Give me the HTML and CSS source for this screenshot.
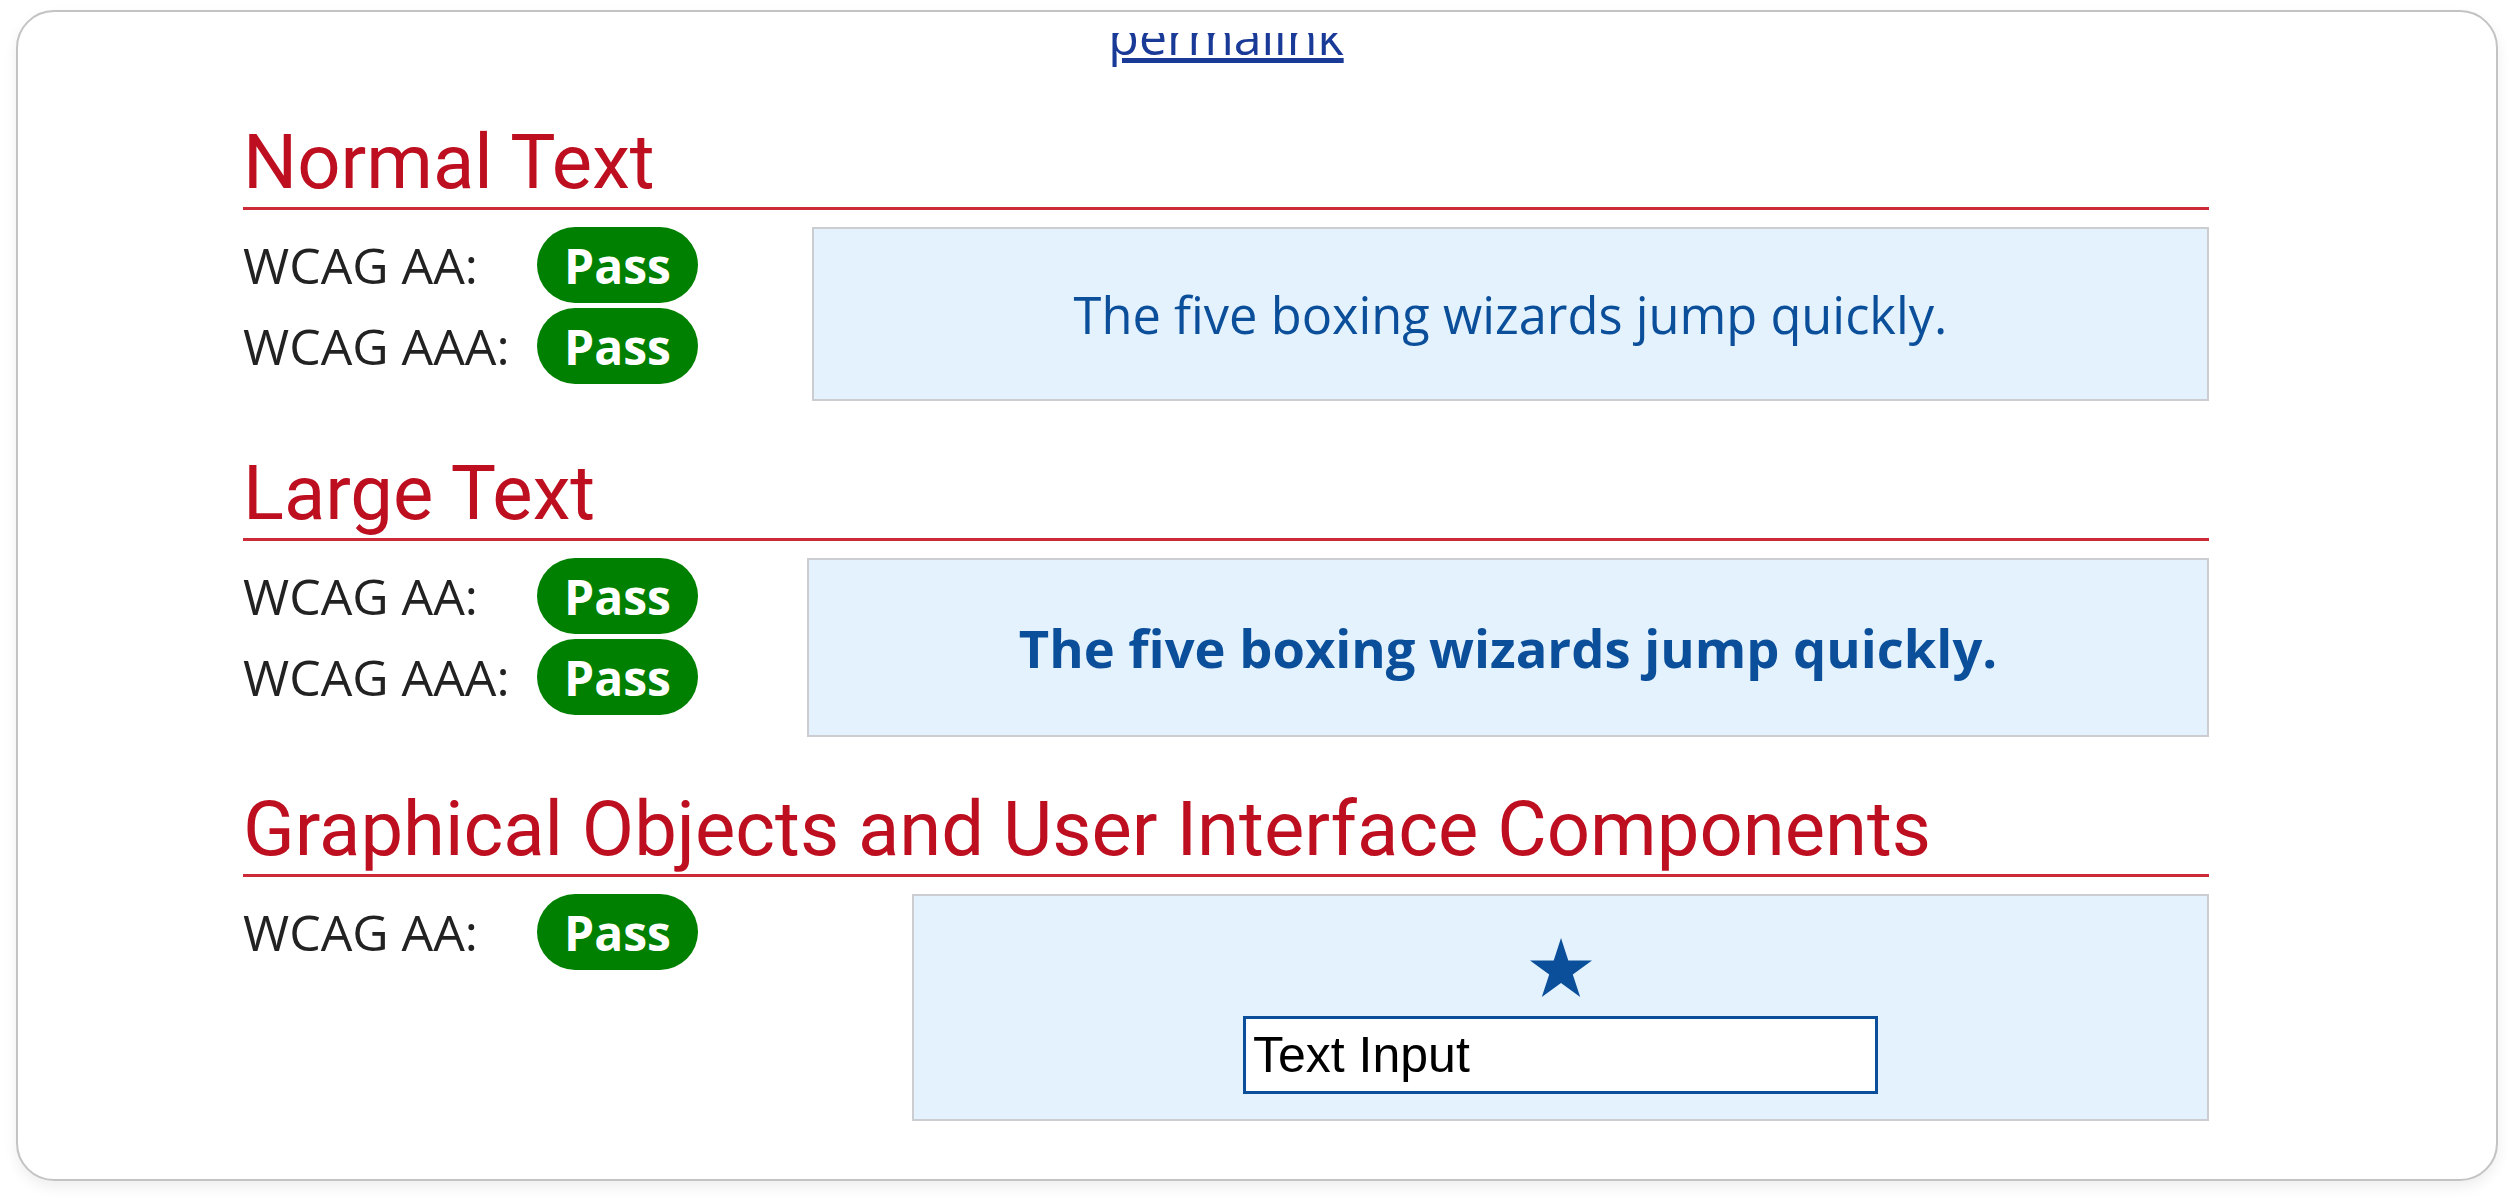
FILE: index.html
```html
<!DOCTYPE html>
<html lang='en'>
<head>
<meta charset='UTF-8'>
<meta name='viewport' content='width=device-width, initial-scale=1.0'>
<title>Contrast Checker Results</title>
<link rel="stylesheet" href="styles.css">
</head>
<body>
  <div class='card'>
    <div class='viewport'>
      <p class='permalink-row'><a href='#'>permalink</a></p>

      <!-- ---------- NORMAL TEXT ---------- -->
      <section class='result-section'>
        <h2>Normal Text</h2>
        <div class='result'>
          <div class='levels levels-normal'>
            <div class='level'><span class='level-name'>WCAG AA:</span><span class='badge'>Pass</span></div>
            <div class='level'><span class='level-name'>WCAG AAA:</span><span class='badge'>Pass</span></div>
          </div>
          <div class='sample sample-normal'>The five boxing wizards jump quickly.</div>
        </div>
      </section>

      <!-- ---------- LARGE TEXT ---------- -->
      <section class='result-section'>
        <h2>Large Text</h2>
        <div class='result'>
          <div class='levels levels-large'>
            <div class='level'><span class='level-name'>WCAG AA:</span><span class='badge'>Pass</span></div>
            <div class='level'><span class='level-name'>WCAG AAA:</span><span class='badge'>Pass</span></div>
          </div>
          <div class='sample sample-large'>The five boxing wizards jump quickly.</div>
        </div>
      </section>

      <!-- ---------- GRAPHICAL OBJECTS ---------- -->
      <section class='result-section'>
        <h2>Graphical Objects and User Interface Components</h2>
        <div class='result'>
          <div class='levels levels-ui'>
            <div class='level'><span class='level-name'>WCAG AA:</span><span class='badge'>Pass</span></div>
          </div>
          <div class='sample sample-ui'>
            <svg class='star' width='62' height='59' viewBox='0 0 62 59' aria-hidden='true'>
              <polygon points='31,0 38.3,22.5 62,22.5 42.8,36.4 50.2,59 31,45.1 11.8,59 19.2,36.4 0,22.5 23.7,22.5'/>
            </svg>
            <input type='text' class='ui-input' value='Text Input' aria-label='Text Input'>
          </div>
        </div>
      </section>
    </div>
  </div>
</body>
</html>
```

FILE: styles.css
```css
/* ---------- COLOURS ---------- */
:root{
  --fg:#0b4f9b;
  --sample-bg:#e3f2fd;
  --sample-border:#cbcdd0;
  --heading:#bd0f1f;
  --rule:#cc2a36;
  --pass:#008000;
  --text:#222222;
}
/* ---------- GLOBAL ---------- */
*{box-sizing:border-box;}
html,body{height:100%;}
body{
  margin:0;padding:10px 12px 21px 16px;background:#ffffff;
  font-family:'Open Sans','Liberation Sans',sans-serif;color:var(--text);
}
.card{
  height:100%;border:2px solid #c3c3c3;border-radius:38px;background:#fff;
  box-shadow:0 6px 14px rgba(0,0,0,.07);padding-top:21px;overflow:hidden;
}
.viewport{height:100%;overflow:hidden;padding:0 287px 0 225px;}
.permalink-row{
  margin:-31px 0 0;text-align:center;font-size:50px;line-height:68px;
}
.permalink-row a{color:#1a3a98;}
/* ---------- RESULT SECTIONS ---------- */
.result-section{margin-top:55px;}
.result-section h2{
  margin:0;font-family:Roboto,'Liberation Sans',sans-serif;font-weight:400;
  font-size:76px;line-height:74px;color:var(--heading);
  padding-bottom:8px;border-bottom:3px solid var(--rule);
}
.result{display:flex;align-items:flex-start;margin-top:17px;}
.levels{flex:none;display:flex;flex-direction:column;gap:5px;}
.levels-normal{width:569px;}
.levels-large{width:564px;}
.levels-ui{width:669px;}
.level{display:flex;align-items:center;}
.level-name{width:294px;font-size:50px;line-height:76px;white-space:nowrap;}
.badge{
  width:161px;height:76px;border-radius:38px;background:var(--pass);color:#fff;
  font-weight:700;font-size:48px;display:flex;align-items:center;justify-content:center;
}
/* ---------- SAMPLES ---------- */
.sample{
  flex:1;border:2px solid var(--sample-border);background:var(--sample-bg);color:var(--fg);
  display:flex;align-items:center;justify-content:center;white-space:nowrap;
}
.sample-normal{height:174px;font-size:50.6px;}
.sample-large{height:179px;font-size:52.5px;font-weight:700;}
.sample-ui{height:227px;flex-direction:column;justify-content:flex-start;padding-top:42px;}
.star{fill:var(--fg);display:block;margin-bottom:19px;}
.ui-input{
  width:635px;height:78px;border:3px solid var(--fg);background:#fff;color:#000;
  padding:0 7px;font-family:'Liberation Sans',Arial,sans-serif;font-size:50px;border-radius:0;
}
```
